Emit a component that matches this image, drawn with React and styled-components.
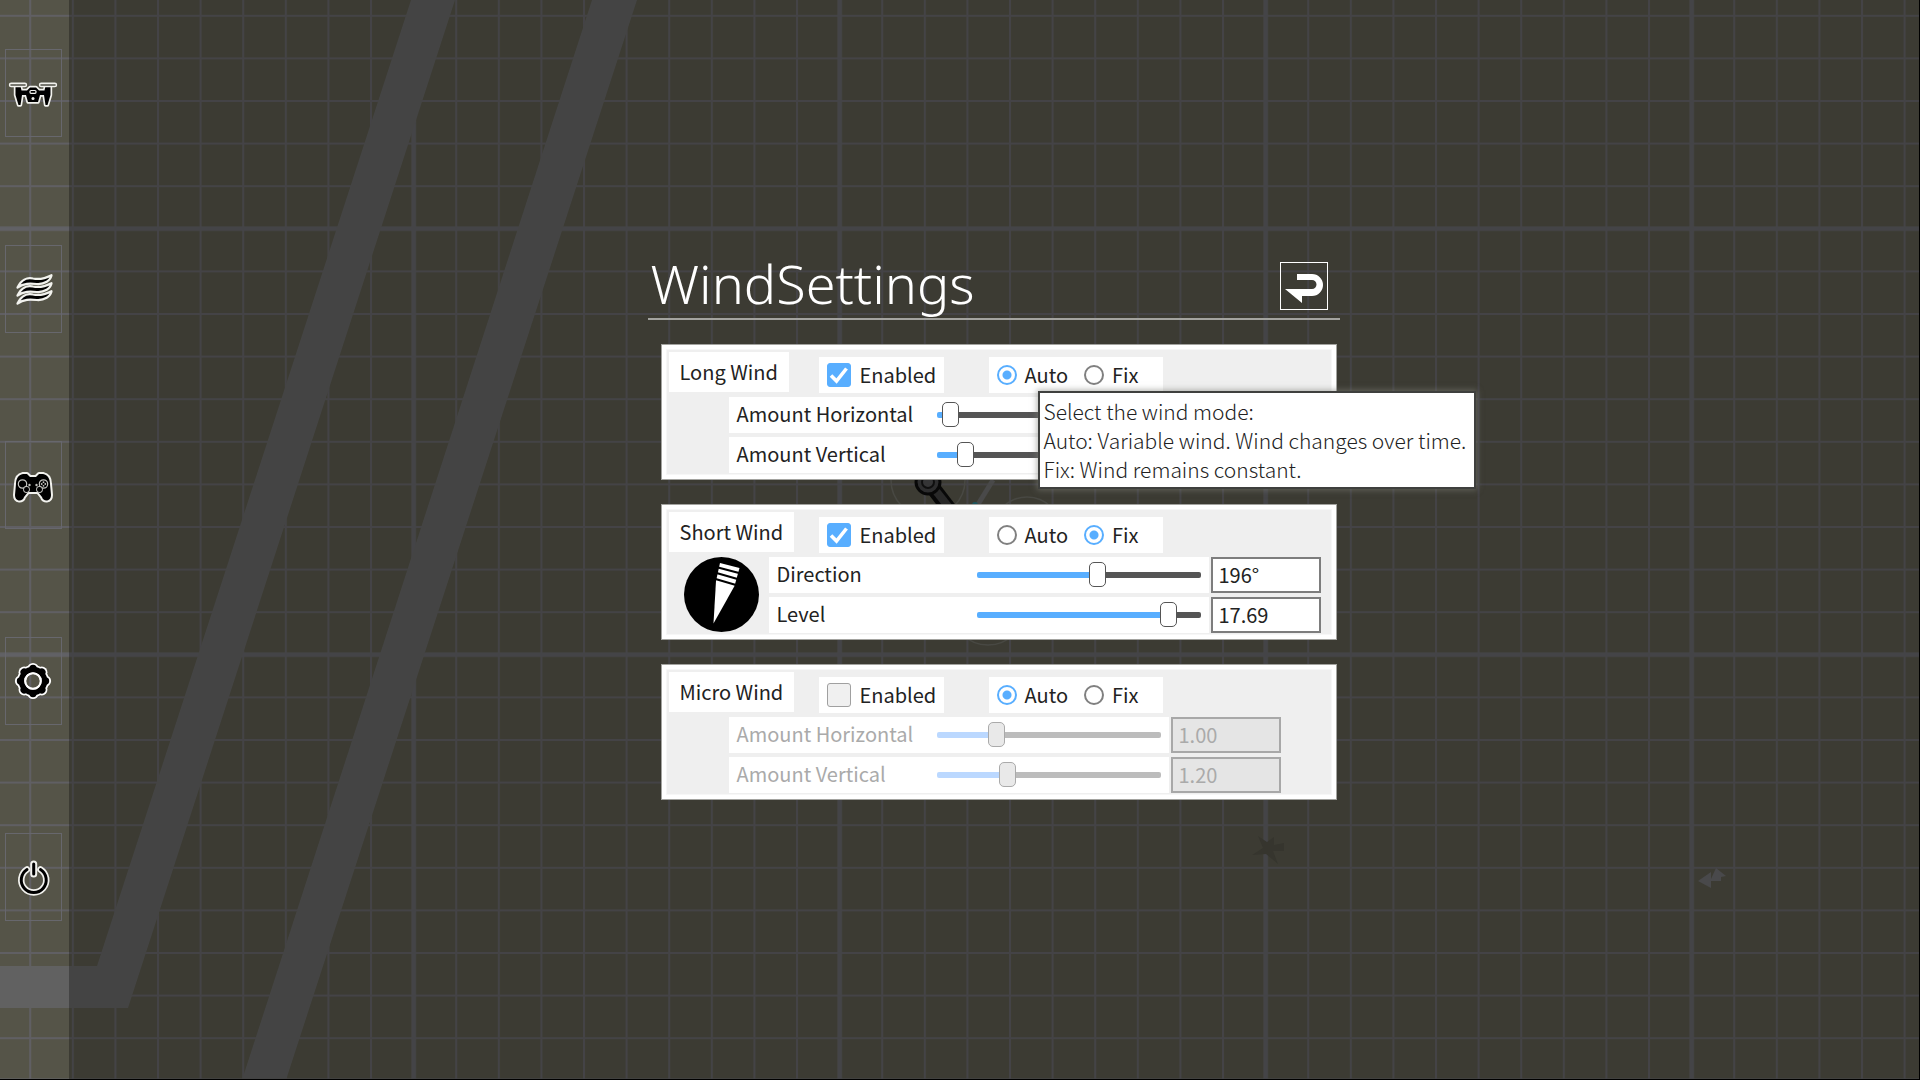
import React, { useState } from "react";
import styled, { createGlobalStyle, css } from "styled-components";

const GlobalStyle = createGlobalStyle`
  *, *::before, *::after { box-sizing: border-box; }
  body {
    margin: 0;
    background: #555448;
    color: #222;
    font-family: "Noto Sans CJK JP", "Noto Sans", sans-serif;
    font-size: 20px;
  }
`;

const Page = styled.div`
  position: relative;
  display: flex;
  min-height: 100vh;
  overflow: hidden;
`;

const MapLayer = styled.div`
  position: absolute;
  inset: 0;

  svg {
    display: block;
    width: 100%;
    height: 100%;
  }
`;

const EdgeLine = styled.div`
  position: absolute;
  inset: 0;
  border: solid #000;
  border-width: 0 1px 1px 0;
  pointer-events: none;
`;

const Sidebar = styled.nav`
  position: relative;
  flex: 0 0 69px;
  display: flex;
  flex-direction: column;
  gap: 108px;
  padding: 49px 7px 0 5px;
`;

const SideButton = styled.button`
  display: block;
  height: 88px;
  padding: 0;
  border: 1px solid #67676d;
  background: transparent;
  cursor: pointer;

  svg {
    display: block;
    width: 55px;
    height: 86px;
    overflow: visible;
  }
`;

const Main = styled.main`
  position: relative;
  flex: 1;
  display: flex;
  flex-direction: column;
  align-items: center;
  justify-content: center;
  padding: 0 2px 18px 0;
  background: rgba(0, 0, 0, 0.29);
`;

const Dialog = styled.section`
  width: 692px;
  max-width: 100%;
`;

const Header = styled.header`
  display: flex;
  justify-content: space-between;
  align-items: flex-start;
  padding: 0 12px 8px 3px;
  border-bottom: 2px solid #a3a39f;
`;

const Title = styled.h1`
  margin: 0;
  color: #fff;
  font: 300 54px/42px "Noto Sans", sans-serif;
`;

const BackButton = styled.button`
  width: 48px;
  height: 48px;
  padding: 0;
  border: 1px solid #fff;
  background: transparent;
  cursor: pointer;

  svg {
    display: block;
    width: 46px;
    height: 46px;
  }
`;

const Panels = styled.div`
  display: flex;
  flex-direction: column;
  gap: 24px;
  padding: 24px 3px 0 13px;
`;

const Panel = styled.section`
  border: 5px solid #fff;
  outline: 1px solid #a3a39f;
  outline-offset: -1px;
  padding: 3px 1px 2px 3px;
  background: #efefef;
  box-shadow: inset 0 0 0 1px #f7f7f7;
`;

const PanelHead = styled.div`
  display: grid;
  grid-template-columns: 150px 170px auto;
  justify-content: start;
  justify-items: start;
  align-items: start;
  height: 45px;
`;

const Tab = styled.h2`
  margin: 0;
  padding: 0 11px;
  background: #fff;
  font-size: 20px;
  font-weight: 400;
  line-height: 40px;
`;

const Cell = styled.div`
  position: relative;
  display: flex;
  align-items: center;
  gap: 16px;
  height: 36px;
  margin-top: 5px;
  padding: 0 ${(p) => (p.$wide ? 24 : 8)}px 0 8px;
  background: #fff;
`;

const Choice = styled.label`
  display: flex;
  align-items: center;
  gap: ${(p) => p.$gap}px;
  line-height: 36px;
  cursor: pointer;
`;

const Checkbox = styled.input`
  appearance: none;
  width: 24px;
  height: 24px;
  margin: 0;
  border: 1px solid #a0a0a0;
  border-radius: 3px;
  background: #f0f0f0;

  &:checked {
    border-color: #58aeff;
    background: #58aeff;
  }
`;

const CheckWrap = styled.span`
  display: grid;

  > * { grid-area: 1 / 1; }
  svg {
    position: relative;
    width: 24px;
    height: 24px;
    pointer-events: none;
  }
`;

const Radio = styled.input`
  appearance: none;
  width: 20px;
  height: 20px;
  margin: 0;
  border: 2px solid #808080;
  border-radius: 50%;
  background: #fff;

  &:checked {
    border-color: #58aeff;
    background: radial-gradient(circle, #58aeff 4px, #fff 5px);
  }
`;

const Body = styled.div`
  display: flex;
  gap: 10px;
  padding-left: ${(p) => (p.$compass ? 15 : 60)}px;
`;

const Compass = styled.svg`
  flex: none;
  width: 75px;
  height: 75px;
`;

const Rows = styled.div`
  display: grid;
  gap: 4px;
`;

const Row = styled.div`
  display: flex;
  gap: 2px;
`;

const SliderCell = styled.label`
  display: flex;
  justify-content: space-between;
  width: 440px;
  height: 36px;
  padding: 0 8px;
  background: #fff;
  color: ${(p) => (p.$off ? "#aaa" : "inherit")};
  line-height: 34px;
`;

const thumb = css`
  appearance: none;
  box-sizing: border-box;
  width: 17px;
  height: 25px;
  margin-top: -10px;
  border: 1px solid #555;
  border-radius: 5px;
  background: #fff;
`;

const Range = styled.input`
  appearance: none;
  align-self: center;
  width: 224px;
  height: 26px;
  margin: 0;
  background: transparent;

  &::-webkit-slider-runnable-track {
    height: 6px;
    border-radius: 2px;
    background: linear-gradient(
      to right,
      ${(p) => (p.disabled ? "#bbd8ff" : "#58aeff")} var(--fill),
      ${(p) => (p.disabled ? "#bcbcbc" : "#555")} var(--fill)
    );
  }

  &::-webkit-slider-thumb {
    ${thumb}
    ${(p) => p.disabled && "background: #e9e9e9; border-color: #aaa;"}
  }
`;

const ValueBox = styled.input`
  width: 110px;
  height: 36px;
  padding: 0 6px 2px;
  border: 2px solid #7d7d7d;
  border-radius: 0;
  background: #fff;
  color: #222;
  font: inherit;

  &:disabled {
    border-color: #a8a8a8;
    background: #e5e5e5;
    color: #aaa;
  }
`;

const Tooltip = styled.div`
  position: absolute;
  z-index: 2;
  top: 34px;
  left: 49px;
  padding: 4px 8px 3px 4px;
  border: 2px solid #3f403e;
  background: #fff;
  box-shadow: 0 0 6px 1px rgba(125, 127, 120, 0.6);
  font-size: 21px;
  font-weight: 300;
  line-height: 29px;
  white-space: pre;
`;

function MapArt() {
  return (
    <svg aria-hidden="true">
      <defs>
        <pattern id="minor" x="29.2" y="14.8" width="42.6" height="42.6" patternUnits="userSpaceOnUse">
          <path d="M1 0V42.6M0 1H42.6" stroke="#605f63" strokeWidth="2" />
        </pattern>
        <pattern id="major" x="411.2" y="226.2" width="426" height="426" patternUnits="userSpaceOnUse">
          <path d="M2.500 0V426M0 2.500H426" stroke="#616165" strokeWidth="4.600" />
        </pattern>
      </defs>
      <rect width="100%" height="100%" fill="url(#minor)" />
      <rect width="100%" height="100%" fill="url(#major)" />
      <path d="M411 0H455L128 1008H0V966H97Z" fill="#616161" />
      <path d="M592 0H637L286 1080H242Z" fill="#616161" />
      <g fill="none" stroke="#66665f" strokeWidth="1.5">
        <circle cx="928" cy="480" r="37" />
        <circle cx="1027" cy="531" r="34" />
        <circle cx="988" cy="609" r="36" />
      </g>
      <path d="M993 480L977 506" stroke="#676767" strokeWidth="5" />
      <path d="M930 484L950 510" stroke="#0c0c0c" strokeWidth="15" />
      <path d="M932 486L951 510" stroke="#3a3a3b" strokeWidth="8" />
      <circle cx="928" cy="482" r="12" fill="#404042" stroke="#0c0c0c" strokeWidth="3" />
      <circle cx="928" cy="482" r="6" fill="#4b4b4d" stroke="#161616" strokeWidth="2" />
      <circle cx="975" cy="505" r="3" fill="#2a7884" />
      <path d="M1698 881L1711 872V879L1716 868L1726 876L1721 877V881H1711V888Z" fill="#67676a" />
      <path
        d="M1258 836L1267 842L1274 837L1274 845L1284 843L1284 851L1273 851L1278 864L1266 854L1252 855L1263 848Z"
        fill="#4c4b41"
      />
    </svg>
  );
}

function Outlined({ children, width = 4 }) {
  return (
    <>
      <g fill="#f2f2ee" stroke="#f2f2ee" strokeWidth={width} strokeLinejoin="round">{children}</g>
      <g fill="#000">{children}</g>
    </>
  );
}

function DroneIcon() {
  return (
    <svg viewBox="0 0 55 86">
      <Outlined width={3.4}>
        <path d="M9.500 36H14.500L15.500 40.500H21L24 37.500H30L33 40.500H38.500L39.500 36H44.500L44.500 45L41.500 55H39.500L38 45H34L32 52H22L20 45H16L14.500 55H12.500L9.500 45Z" />
      </Outlined>
      <rect x="3.5" y="33.2" width="17" height="3.4" rx="1.7" fill="#77776f" stroke="#f2f2ee" strokeWidth="1.4" />
      <rect x="33.5" y="33.2" width="17" height="3.4" rx="1.7" fill="#77776f" stroke="#f2f2ee" strokeWidth="1.4" />
      <rect x="24" y="40.500" width="6" height="2.800" rx="1" fill="none" stroke="#f2f2ee" strokeWidth="1.2" />
      <rect x="25.500" y="47" width="3" height="3" rx="1.500" fill="#f2f2ee" />
    </svg>
  );
}

function WindIcon() {
  const wave = "M11.500 41.500C15 34 21 31 27 32.500C34 34 40 32 45.500 29.200C45 34.500 38 38.500 31 38C24 37.500 18 37 11.500 41.500Z";
  return (
    <svg viewBox="0 0 55 86">
      {[0, 8, 16].map((y) => (
        <path
          key={y}
          d={wave}
          transform={`translate(0 ${y})`}
          fill="#000"
          stroke="#f2f2ee"
          strokeWidth="2.2"
          strokeLinejoin="round"
        />
      ))}
    </svg>
  );
}

function GamepadIcon() {
  return (
    <svg viewBox="0 0 55 86">
      <Outlined>
        <path d="M17 32H21L24 35H30L33 32H37C42 33 44 37 44 42L45 53C45 60 37 60 36 55L32 50H22L18 55C17 60 9 60 9 53L10 42C10 37 12 33 17 32Z" />
      </Outlined>
      <g fill="none" stroke="#c4c4c0" strokeWidth="1.2">
        <circle cx="16.500" cy="42" r="4.200" />
        <circle cx="37.500" cy="42" r="4.200" />
        <circle cx="20.500" cy="47.500" r="2.800" />
        <circle cx="33.500" cy="47.500" r="2.800" />
      </g>
      <circle cx="20.500" cy="47.500" r="2.400" />
      <circle cx="33.500" cy="47.500" r="2.400" />
      <path d="M13.500 42H19.500M16.500 39V45" stroke="#000" strokeWidth="2" />
      <g fill="#c4c4c0">
        <circle cx="23.500" cy="43" r="1.200" />
        <circle cx="30.500" cy="43" r="1.200" />
        <circle cx="37.500" cy="40.200" r="0.900" />
        <circle cx="37.500" cy="43.800" r="0.900" />
        <circle cx="35.700" cy="42" r="0.900" />
        <circle cx="39.300" cy="42" r="0.900" />
      </g>
    </svg>
  );
}

function GearIcon() {
  const teeth = [0, 45, 90, 135, 180, 225, 270, 315];
  return (
    <svg viewBox="0 0 55 86">
      <circle cx="27" cy="43" r="11.500" fill="none" stroke="#fff" strokeWidth="9" />
      {teeth.map((a) => (
        <circle key={a} cx="27" cy="30.500" r="5.600" fill="#fff" transform={`rotate(${a} 27 43)`} />
      ))}
      <circle cx="27" cy="43" r="11.500" fill="none" stroke="#000" strokeWidth="5.500" />
      {teeth.map((a) => (
        <circle key={a} cx="27" cy="30.500" r="3.700" transform={`rotate(${a} 27 43)`} />
      ))}
      <circle cx="27" cy="43" r="7.800" fill="none" stroke="#fff" strokeWidth="2" />
    </svg>
  );
}

function PowerIcon() {
  const ring = "M21 35.500A12.500 12.500 0 1 0 34.500 35.500";
  const stem = "M27.700 30V40";
  return (
    <svg viewBox="0 0 55 86">
      <g fill="none" strokeLinecap="round">
        <path d={ring} stroke="#f2f2ee" strokeWidth="6.500" />
        <path d={ring} stroke="#000" strokeWidth="3" />
        <path d={stem} stroke="#f2f2ee" strokeWidth="7" />
        <path d={stem} stroke="#000" strokeWidth="3" />
      </g>
    </svg>
  );
}

const sideItems = [
  ["Drone", DroneIcon],
  ["Wind", WindIcon],
  ["Controller", GamepadIcon],
  ["Settings", GearIcon],
  ["Power", PowerIcon],
];

function CompassDial() {
  return (
    <Compass viewBox="0 0 75 75" aria-hidden="true">
      <circle cx="37.500" cy="37.500" r="37.500" />
      <path d="M36 6L55.500 11L50.500 29L29.500 66.500L32 24Z" fill="#fff" />
      <path d="M34 10.500L55 16M32.500 16L53.500 22M31.500 22L52 28" stroke="#000" strokeWidth="2.200" />
    </Compass>
  );
}

function SliderRow({ label, value, max, text, disabled }) {
  const [current, setCurrent] = useState(value);
  const ratio = current / max;
  return (
    <Row>
      <SliderCell $off={disabled}>
        {label}
        <Range
          type="range"
          min="0"
          max={max}
          step="any"
          value={current}
          disabled={disabled}
          onChange={(e) => setCurrent(Number(e.target.value))}
          style={{ "--fill": `${8 + ratio * 207}px` }}
        />
      </SliderCell>
      <ValueBox aria-label={`${label} value`} defaultValue={text} disabled={disabled} />
    </Row>
  );
}

function WindPanel({ name, enabled, mode, compass, rows, tooltip }) {
  const [on, setOn] = useState(enabled);
  const [picked, setPicked] = useState(mode);
  return (
    <Panel>
      <PanelHead>
        <Tab>{name}</Tab>
        <Cell>
          <Choice $gap={9}>
            <CheckWrap>
              <Checkbox type="checkbox" checked={on} onChange={(e) => setOn(e.target.checked)} />
              {on && (
                <svg viewBox="0 0 24 24" aria-hidden="true">
                  <path d="M4 12.500L9.500 18L19.500 5.500" fill="none" stroke="#fff" strokeWidth="3.600" />
                </svg>
              )}
            </CheckWrap>
            Enabled
          </Choice>
        </Cell>
        <Cell $wide>
          {["Auto", "Fix"].map((option) => (
            <Choice key={option} $gap={8}>
              <Radio
                type="radio"
                name={name}
                checked={picked === option}
                onChange={() => setPicked(option)}
              />
              {option}
            </Choice>
          ))}
          {tooltip && <Tooltip role="tooltip">{tooltip}</Tooltip>}
        </Cell>
      </PanelHead>
      <Body $compass={compass}>
        {compass && <CompassDial />}
        <Rows>
          {rows.map((row) => (
            <SliderRow key={row.label} {...row} disabled={!on} />
          ))}
        </Rows>
      </Body>
    </Panel>
  );
}

const modeHelp =
  "Select the wind mode:\nAuto: Variable wind. Wind changes over time.\nFix: Wind remains constant.";

export default function App() {
  return (
    <Page>
      <GlobalStyle />
      <MapLayer>
        <MapArt />
      </MapLayer>
      <Sidebar aria-label="Main">
        {sideItems.map(([label, Icon]) => (
          <SideButton key={label} type="button" aria-label={label}>
            <Icon />
          </SideButton>
        ))}
      </Sidebar>
      <Main>
        <Dialog>
          <Header>
            <Title>WindSettings</Title>
            <BackButton type="button" aria-label="Back">
              <svg viewBox="0 0 46 46" aria-hidden="true">
                <path
                  d="M16 11H31A11 11 0 0 1 31 33H21V40L4 26H31A4.500 4.500 0 0 0 31 17H16Z"
                  fill="#fff"
                />
              </svg>
            </BackButton>
          </Header>
          <Panels>
            <WindPanel
              name="Long Wind"
              enabled
              mode="Auto"
              tooltip={modeHelp}
              rows={[
                { label: "Amount Horizontal", value: 0.1, max: 4, text: "" },
                { label: "Amount Vertical", value: 0.4, max: 4, text: "" },
              ]}
            />
            <WindPanel
              name="Short Wind"
              enabled
              mode="Fix"
              compass
              rows={[
                { label: "Direction", value: 196, max: 360, text: "196°" },
                { label: "Level", value: 17.69, max: 20, text: "17.69" },
              ]}
            />
            <WindPanel
              name="Micro Wind"
              enabled={false}
              mode="Auto"
              rows={[
                { label: "Amount Horizontal", value: 1, max: 4, text: "1.00" },
                { label: "Amount Vertical", value: 1.2, max: 4, text: "1.20" },
              ]}
            />
          </Panels>
        </Dialog>
      </Main>
      <EdgeLine />
    </Page>
  );
}
